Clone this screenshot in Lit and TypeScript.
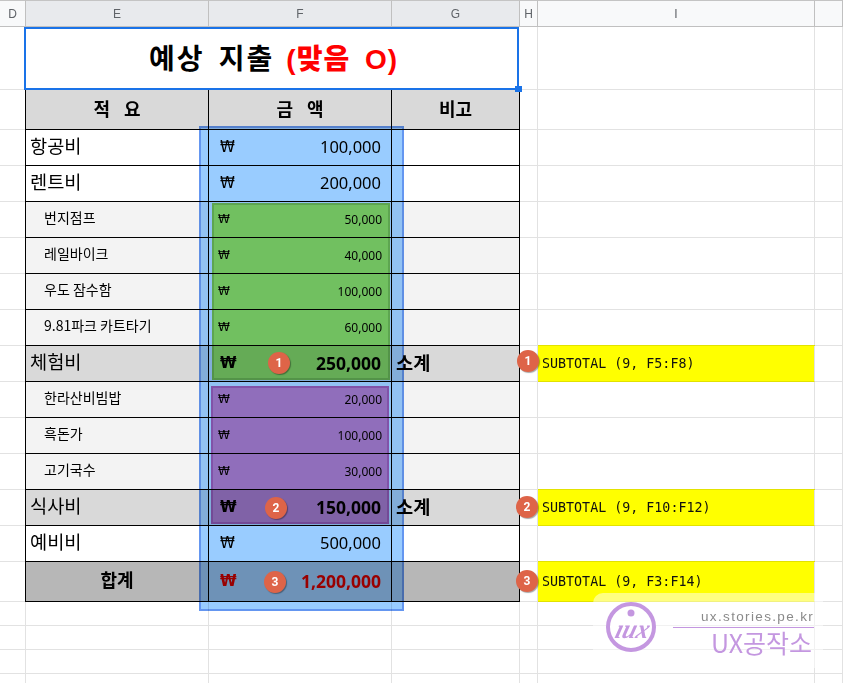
import { LitElement, html, css, svg } from "lit";
import { customElement } from "lit/decorators.js";

type Row = { kind: string; label: string; amt: string; note?: string };
const rows: Row[] = [
  { kind: "main", label: "항공비", amt: "100,000" },
  { kind: "main", label: "렌트비", amt: "200,000" },
  { kind: "sub", label: "번지점프", amt: "50,000" },
  { kind: "sub", label: "레일바이크", amt: "40,000" },
  { kind: "sub", label: "우도 잠수함", amt: "100,000" },
  { kind: "sub", label: "9.81파크 카트타기", amt: "60,000" },
  { kind: "total", label: "체험비", amt: "250,000", note: "소계" },
  { kind: "sub", label: "한라산비빔밥", amt: "20,000" },
  { kind: "sub", label: "흑돈가", amt: "100,000" },
  { kind: "sub", label: "고기국수", amt: "30,000" },
  { kind: "total", label: "식사비", amt: "150,000", note: "소계" },
  { kind: "main", label: "예비비", amt: "500,000" },
];
const formulas: Record<number, string> = {
  6: "SUBTOTAL (9, F5:F8)",
  10: "SUBTOTAL (9, F10:F12)",
};

@customElement("app-root")
export class AppRoot extends LitElement {
  static styles = css`
    :host { display: block; width: 843px; height: 683px; overflow: hidden; position: relative; background: #fff; font-family: "Noto Sans", "Noto Sans CJK KR", sans-serif; color: #000; }
    .sheet { display: grid; grid-template-columns: 26px 183px 183px 128px 18px 277px 28px; grid-template-rows: 27px 63px 40px repeat(12, 36px) 40px 24px 24px 24px 24px; width: 843px; height: 683px; }
    .c { box-sizing: border-box; border-right: 1px solid #e2e2e2; border-bottom: 1px solid #e2e2e2; display: flex; align-items: center; min-width: 0; white-space: nowrap; }
    .hd { background: #e8eaed; border-right: 1px solid #c0c0c0; border-bottom: 1px solid #c0c0c0; border-top: 1px solid #c4c4c4; justify-content: center; font: 12px "Liberation Sans", sans-serif; color: #5f6368; }
    .hd.off { background: #f8f9fa; }
    .title { grid-column: 2 / span 3; display: flex; align-items: center; justify-content: center; font-size: 28px; font-weight: 700; letter-spacing: 2px; box-sizing: border-box; border: 2px solid #1a73e8; margin: 0 1px 0 -2px; background: #fff; position: relative; z-index: 2; font-family: "Noto Sans CJK KR", sans-serif; padding-left: 4px; padding-bottom: 4px; word-spacing: 6px; white-space: nowrap; }
    .title b { color: #f00; margin-left: 12px; letter-spacing: 1px; font-family: "Liberation Sans", "Noto Sans CJK KR", sans-serif; }
    .handle { position: absolute; right: -5px; bottom: -4px; width: 7px; height: 6px; background: #1a73e8; }
    .t { border-right: 1px solid #000; border-bottom: 1px solid #000; font-family: "Noto Sans CJK KR", sans-serif; }
    .t.first { border-left: 1px solid #000; margin-left: -1px; }
    .thead { background: #d9d9d9; font-size: 18px; font-weight: 700; justify-content: center; padding-bottom: 3px; }
    .wide { word-spacing: 10px; }
    .label { padding-left: 4px; padding-bottom: 7px; font-size: 18.67px; }
    .label.s { font-size: 14px; padding-left: 18px; padding-bottom: 5px; }
    .sub { background: #f3f3f3; }
    .total { background: #d9d9d9; }
    .grand { background: #b7b7b7; }
    .amt { justify-content: space-between; padding: 0 10px 2px 11px; font-family: "Noto Sans", sans-serif; font-size: 16.5px; }
    .won { font-family: "DejaVu Sans", sans-serif; font-size: 15px; }
    .amt.s { font-size: 12px; padding: 0 9px 1px 9px; }
    .amt.s .won { font-size: 12px; }
    .amt.b { font-weight: 700; font-size: 17.5px; }
    .amt.red { color: #f00; }
    .note { font-size: 18.67px; font-weight: 700; padding-left: 4px; padding-bottom: 5px; }
    .grandlabel { justify-content: center; font-size: 18px; font-weight: 700; padding-bottom: 6px; }
    .y { background: #ff0; padding-left: 4px; font: 13.33px "DejaVu Sans Mono", "Liberation Mono", monospace; border-bottom-color: #e2e200; box-shadow: 0 -1px 0 #e2e200; color: #111; }
    .ov { position: absolute; box-sizing: border-box; mix-blend-mode: multiply; }
    .blue { left: 199px; top: 126px; width: 205px; height: 485px; background: #99ccff; border: 2px solid #6496f0; }
    .green { left: 212px; top: 203px; width: 178px; height: 177px; background: #c5fd65; border: 2px solid #a3d954; }
    .purple { left: 211px; top: 386px; width: 178px; height: 138px; background: #fc91c5; border: 2px solid #e26cb0; }
    .dot { position: absolute; width: 22px; height: 22px; border-radius: 50%; background: #de6448; color: #fff; font: 700 12px/22px "Roboto", "Liberation Sans", sans-serif; text-align: center; box-shadow: 1px 1px 1px rgba(0, 0, 0, 0.35); }
    .wm { position: absolute; left: 593px; top: 593px; width: 230px; height: 75px; border-radius: 10px 0 0 0; background: rgba(255,255,255,.5); }
    .logo { position: absolute; left: 606px; top: 602px; width: 50px; height: 50px; }
    .url { position: absolute; left: 701px; width: 113px; overflow: hidden; top: 609px; font: 13.5px "Liberation Sans", sans-serif; letter-spacing: 1.35px; color: #8a8a8a; white-space: nowrap; }
    .rule { position: absolute; left: 673px; top: 627px; width: 141px; height: 1px; background: #c497e0; }
    .brand { position: absolute; left: 711px; top: 626px; font: 25px "Noto Sans CJK KR", sans-serif; color: #c497e0; line-height: 32px; white-space: nowrap; }
  `;

  private renderRow(r: Row, i: number) {
    const cls = r.kind;
    const small = r.kind === "sub";
    return html`
      <div class="c"></div>
      <div class="c t first ${cls}"><span class="label ${small ? "s" : ""}">${r.label}</span></div>
      <div class="c t amt ${cls} ${small ? "s" : ""} ${r.kind === "total" ? "b" : ""}"><span class="won">₩</span><span>${r.amt}</span></div>
      <div class="c t ${cls}">${r.note ? html`<span class="note">${r.note}</span>` : ""}</div>
      <div class="c"></div>
      ${formulas[i] ? html`<div class="c y">${formulas[i]}</div>` : html`<div class="c"></div>`}
      <div class="c"></div>`;
  }

  private logo() {
    return html`<svg class="logo" viewBox="0 0 50 50" aria-hidden="true">
      <circle cx="25" cy="25" r="23" fill="#fff" stroke="#c497e0" stroke-width="4"></circle>
      <circle cx="25" cy="11" r="3.5" fill="#c497e0"></circle>
      ${svg`<text transform="translate(8 36) skewX(-16)" font-family="Liberation Serif" font-style="italic" font-weight="700" font-size="27" fill="#c497e0" textLength="33" lengthAdjust="spacingAndGlyphs">ıux</text>`}
    </svg>`;
  }

  render() {
    const empty = (n: number) => Array.from({ length: n }, () => html`<div class="c"></div>`);
    return html`
      <div class="sheet">
        <div class="c hd off">D</div><div class="c hd">E</div><div class="c hd">F</div><div class="c hd">G</div>
        <div class="c hd off">H</div><div class="c hd off">I</div><div class="c hd off"></div>

        <div class="c"></div>
        <div class="title"><span>예상 지출</span><b>(맞음 O)</b><i class="handle"></i></div>
        ${empty(3)}

        <div class="c"></div>
        <div class="c t first thead wide">적 요</div>
        <div class="c t thead wide">금 액</div>
        <div class="c t thead">비고</div>
        ${empty(3)}

        ${rows.map((r, i) => this.renderRow(r, i))}

        <div class="c"></div>
        <div class="c t first grand grandlabel">합계</div>
        <div class="c t grand amt b red"><span class="won">₩</span><span>1,200,000</span></div>
        <div class="c t grand"></div>
        <div class="c"></div>
        <div class="c y">SUBTOTAL (9, F3:F14)</div>
        <div class="c"></div>
        ${empty(28)}
      </div>
      <div class="ov blue"></div>
      <div class="ov green"></div>
      <div class="ov purple"></div>
      <span class="dot" style="left:268px;top:352px">1</span>
      <span class="dot" style="left:265px;top:497px">2</span>
      <span class="dot" style="left:264px;top:571px">3</span>
      <span class="dot" style="left:517px;top:350px">1</span>
      <span class="dot" style="left:516px;top:496px">2</span>
      <span class="dot" style="left:516px;top:570px">3</span>
      <div class="wm"></div>
      ${this.logo()}
      <div class="url">ux.stories.pe.kr</div>
      <div class="rule"></div>
      <div class="brand">UX공작소</div>
    `;
  }
}
